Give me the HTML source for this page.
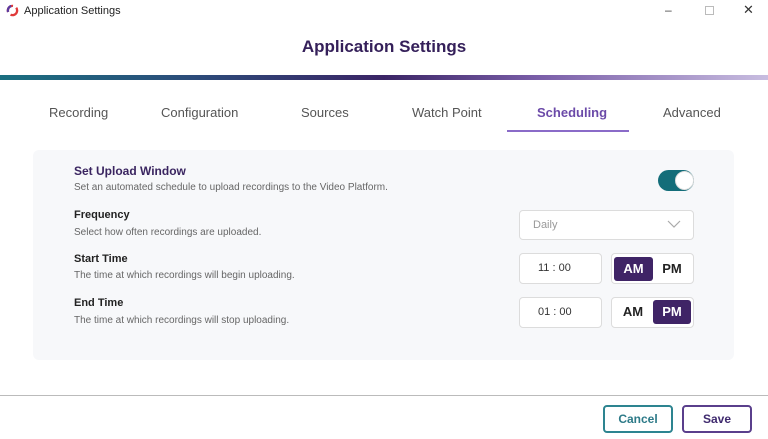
<!DOCTYPE html>
<html><head><style>
*{margin:0;padding:0;box-sizing:border-box}
body{width:768px;height:439px;background:#fff;font-family:"Liberation Sans",sans-serif;position:relative;overflow:hidden;color:#222}
.a{position:absolute}
.tab{position:absolute;top:105px;font-size:13px;color:#555;white-space:nowrap}
.lbl{font-size:11px;font-weight:bold;color:#222}
.sub{font-size:10px;color:#666}
.box{position:absolute;background:#fff;border:1px solid #dcdcdc;border-radius:4px}
.seg{position:absolute;font-size:13px;font-weight:bold;text-align:center;border-radius:3px}
</style></head><body>
<svg class="a" style="left:6px;top:4px" width="13" height="13" viewBox="0 0 14 14"><circle cx="7" cy="7" r="5" fill="none" stroke="#e03a3a" stroke-width="2.5" stroke-dasharray="10 4"/><circle cx="7" cy="7" r="5" fill="none" stroke="#5a3aa0" stroke-width="2.5" stroke-dasharray="8 24" stroke-dashoffset="-14"/></svg>
<div class="a" style="left:24px;top:5px;font-size:11px;color:#222">Application Settings</div>
<div class="a" style="left:665px;top:3px;font-size:12px;color:#444">–</div>
<div class="a" style="left:705px;top:6px;width:9px;height:9px;border:1px solid #bbb"></div>
<div class="a" style="left:743px;top:2px;font-size:13px;color:#333">✕</div>
<div class="a" style="left:0;width:768px;top:37px;text-align:center;font-size:17px;font-weight:bold;color:#35205a">Application Settings</div>
<div class="a" style="left:0;top:75px;width:768px;height:5px;background:linear-gradient(90deg,#1a6f80 0%,#2c4c7a 25%,#3b2566 50%,#7a5ea8 70%,#c8bde0 100%)"></div>
<div class="tab" style="left:49px">Recording</div>
<div class="tab" style="left:161px">Configuration</div>
<div class="tab" style="left:301px">Sources</div>
<div class="tab" style="left:412px">Watch Point</div>
<div class="tab" style="left:537px;color:#6b4aa8;font-weight:bold">Scheduling</div>
<div class="tab" style="left:663px">Advanced</div>
<div class="a" style="left:507px;top:130px;width:122px;height:2px;background:#8a6bc8"></div>
<div class="a" style="left:33px;top:150px;width:701px;height:210px;background:#f7f8fa;border-radius:6px"></div>
<div class="a lbl" style="left:74px;top:164px;font-size:12px;color:#3a2560">Set Upload Window</div>
<div class="a sub" style="left:74px;top:182px">Set an automated schedule to upload recordings to the Video Platform.</div>
<div class="a" style="left:658px;top:170px;width:36px;height:21px;border-radius:11px;background:#136d79"></div>
<div class="a" style="left:675px;top:171px;width:19px;height:19px;border-radius:50%;background:#fff;border:1px solid #ddd"></div>
<div class="a lbl" style="left:74px;top:209px">Frequency</div>
<div class="a sub" style="left:74px;top:227px">Select how often recordings are uploaded.</div>
<div class="box" style="left:519px;top:210px;width:175px;height:30px"></div>
<div class="a" style="left:533px;top:219px;font-size:11px;color:#999">Daily</div>
<svg class="a" style="left:667px;top:220px" width="14" height="9"><path d="M1 1 L7 7 L13 1" fill="none" stroke="#aaa" stroke-width="1.2"/></svg>
<div class="a lbl" style="left:74px;top:253px">Start Time</div>
<div class="a sub" style="left:74px;top:270px">The time at which recordings will begin uploading.</div>
<div class="box" style="left:519px;top:253px;width:83px;height:31px"></div>
<div class="a" style="left:538px;top:262px;font-size:11px;color:#333">11 : 00</div>
<div class="box" style="left:611px;top:253px;width:83px;height:31px"></div>
<div class="seg" style="left:614px;top:257px;width:39px;height:24px;line-height:24px;background:#3f2466;color:#fff">AM</div>
<div class="seg" style="left:653px;top:257px;width:38px;height:24px;line-height:24px;color:#222">PM</div>
<div class="a lbl" style="left:74px;top:297px">End Time</div>
<div class="a sub" style="left:74px;top:315px">The time at which recordings will stop uploading.</div>
<div class="box" style="left:519px;top:297px;width:83px;height:31px"></div>
<div class="a" style="left:538px;top:306px;font-size:11px;color:#333">01 : 00</div>
<div class="box" style="left:611px;top:297px;width:83px;height:31px"></div>
<div class="seg" style="left:614px;top:300px;width:38px;height:24px;line-height:24px;color:#222">AM</div>
<div class="seg" style="left:653px;top:300px;width:38px;height:24px;line-height:24px;background:#3f2466;color:#fff">PM</div>
<div class="a" style="left:0;top:395px;width:768px;height:1px;background:#bbb"></div>
<div class="a" style="left:603px;top:405px;width:70px;height:28px;border:2px solid #2d8490;border-radius:4px;text-align:center;line-height:24px;font-size:12px;font-weight:bold;color:#2d7a88">Cancel</div>
<div class="a" style="left:682px;top:405px;width:70px;height:28px;border:2px solid #5a3f8c;border-radius:4px;text-align:center;line-height:24px;font-size:12px;font-weight:bold;color:#3f2a6e">Save</div>
</body></html>
